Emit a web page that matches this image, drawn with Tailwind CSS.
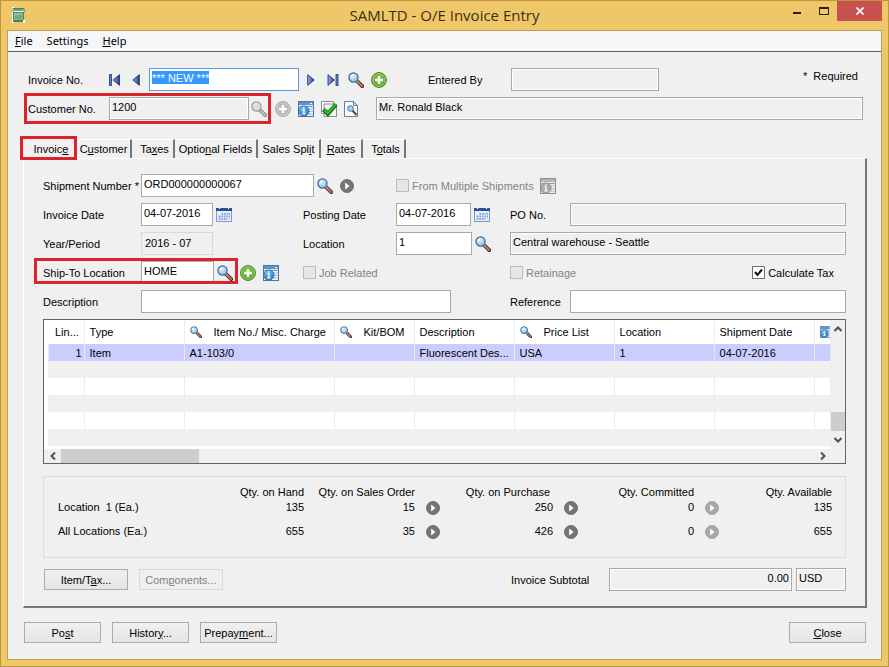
<!DOCTYPE html>
<html lang="en">

<head>
    <meta charset="UTF-8">
    <meta name="viewport" content="width=device-width, initial-scale=1.0">
    <title>SAMLTD - O/E Invoice Entry</title>
    <script src="https://cdn.jsdelivr.net/npm/@tailwindcss/browser@4"></script>
</head>

<body class="bg-[#efc769] font-['Liberation_Sans',Arial,sans-serif] text-[11px] leading-4 text-black">
    <!-- Icon set (zero size rather than hidden, so the gradients still resolve) -->
    <svg class="absolute w-0 h-0" aria-hidden="true">
        <defs>
            <linearGradient id="gBlue" x1="0" y1="0" x2="1" y2="0">
                <stop offset="0" stop-color="#8fb0ec" />
                <stop offset="1" stop-color="#1c3f9a" />
            </linearGradient>
            <radialGradient id="gLens" cx=".4" cy=".35" r=".7">
                <stop offset="0" stop-color="#e4f5ff" />
                <stop offset="1" stop-color="#7db9e3" />
            </radialGradient>
            <radialGradient id="gGreen" cx=".5" cy=".4" r=".6">
                <stop offset="0" stop-color="#8ed24c" />
                <stop offset="1" stop-color="#4c9a20" />
            </radialGradient>
            <radialGradient id="gInfo" cx=".4" cy=".3" r=".8">
                <stop offset="0" stop-color="#7cc4f4" />
                <stop offset="1" stop-color="#1e70b8" />
            </radialGradient>
            <symbol id="first" viewBox="0 0 12 12">
                <rect x=".5" y=".5" width="2" height="11" fill="#5f80c8" stroke="#23376e" stroke-width=".8" />
                <path d="M10.500.700V11.300L4 6z" fill="url(#gBlue)" stroke="#23376e" stroke-width=".9" />
            </symbol>
            <symbol id="prev" viewBox="0 0 8 12">
                <path d="M7.300.700V11.300L.800 6z" fill="url(#gBlue)" stroke="#23376e" stroke-width=".9" />
            </symbol>
            <symbol id="next" viewBox="0 0 8 12">
                <path d="M.700.700V11.300L7.200 6z" fill="url(#gBlue)" stroke="#23376e" stroke-width=".9" />
            </symbol>
            <symbol id="last" viewBox="0 0 12 12">
                <path d="M1 .700V11.300L7.500 6z" fill="url(#gBlue)" stroke="#23376e" stroke-width=".9" />
                <rect x="9" y=".5" width="2" height="11" fill="#5f80c8" stroke="#23376e" stroke-width=".8" />
            </symbol>
            <symbol id="find" viewBox="0 0 16 16">
                <path d="M9.500 9.500l4.700 4.700" stroke="#4b2020" stroke-width="3.800" stroke-linecap="round" />
                <path d="M10.500 10.500l3.500 3.500" stroke="#b9786f" stroke-width="2.200" stroke-linecap="round" />
                <path d="M8.200 8.200l2 2" stroke="#a8a8a8" stroke-width="2" />
                <circle cx="5.500" cy="5.500" r="4.600" fill="url(#gLens)" stroke="#3d678f" stroke-width="1.200" />
                <path d="M3 5a2.800 2.800 0 012.500-2.300" stroke="#fff" stroke-width="1.100" fill="none" />
            </symbol>
            <symbol id="find-off" viewBox="0 0 16 16">
                <path d="M9.500 9.500l4.700 4.700" stroke="#858585" stroke-width="3.800" stroke-linecap="round" />
                <path d="M10 10l4 4" stroke="#c4c4c4" stroke-width="2" stroke-linecap="round" />
                <circle cx="5.500" cy="5.500" r="4.600" fill="#dcdcdc" stroke="#9c9c9c" stroke-width="1.200" />
                <path d="M3 5a2.800 2.800 0 012.500-2.300" stroke="#fff" stroke-width="1.100" fill="none" />
            </symbol>
            <symbol id="add" viewBox="0 0 16 16">
                <circle cx="8" cy="8" r="7.400" fill="url(#gGreen)" stroke="#3f7f22" />
                <circle cx="8" cy="8" r="6.300" fill="none" stroke="#b5e08a" stroke-width=".8" />
                <path d="M8 4v8M4 8h8" stroke="#fff" stroke-width="2.400" />
            </symbol>
            <symbol id="add-off" viewBox="0 0 16 16">
                <circle cx="8" cy="8" r="7.400" fill="#b9b9b9" stroke="#a4a4a4" />
                <circle cx="8" cy="8" r="6.300" fill="none" stroke="#dadada" stroke-width=".8" />
                <path d="M8 4v8M4 8h8" stroke="#fff" stroke-width="2.400" />
            </symbol>
            <symbol id="info" viewBox="0 0 16 16">
                <rect x=".5" y=".5" width="15" height="15" fill="#eaf2fa" stroke="#54779f" />
                <path d="M1 2.500h14" stroke="#5b94cf" stroke-width="3" />
                <path d="M1.500 5.500h13M11 8h1.500M13.500 8h1M11 10.500h1.500M13.500 10.500h1M11 13h1.500M13.500 13h1" stroke="#6a8fb8" />
                <path d="M12 2.500h2" stroke="#fff" />
                <circle cx="5.800" cy="10" r="5.200" fill="url(#gInfo)" stroke="#2a6ba8" stroke-width=".7" />
                <path d="M5.800 6.200v1.500M4.600 9h1.400v3.800M4.300 12.800h3.200" stroke="#fff" stroke-width="1.300" fill="none" />
            </symbol>
            <symbol id="info-off" viewBox="0 0 16 16">
                <rect x=".5" y=".5" width="15" height="15" fill="#ececec" stroke="#8e8e8e" />
                <path d="M1 2.500h14" stroke="#b5b5b5" stroke-width="3" />
                <path d="M1.500 5.500h13M11 8h1.500M13.500 8h1M11 10.500h1.500M13.500 10.500h1M11 13h1.500M13.500 13h1" stroke="#999" />
                <circle cx="5.800" cy="10" r="5.200" fill="#aaa" stroke="#8a8a8a" stroke-width=".7" />
                <path d="M5.800 6.200v1.500M4.600 9h1.400v3.800M4.300 12.800h3.200" stroke="#fff" stroke-width="1.300" fill="none" />
            </symbol>
            <symbol id="check" viewBox="0 0 16 16">
                <path d="M.5.500h12v12H.5z" fill="#fff" stroke="#8b8b8b" />
                <path d="M3 3h12.500v12.500H3z" fill="#f4f4f4" stroke="#8b8b8b" />
                <path d="M2.500 8.500l4.300 4.300 8-9" stroke="#0b5c0b" stroke-width="4.200" fill="none" />
                <path d="M3 8.600l3.800 3.600 7.400-8.200" stroke="#2cc02c" stroke-width="2.400" fill="none" />
            </symbol>
            <symbol id="preview" viewBox="0 0 14 16">
                <path d="M.5.500h9l4 4v11H.5z" fill="#f7fafd" stroke="#6b7f96" />
                <path d="M9.500.500v4h4z" fill="#c9dcf0" stroke="#6b7f96" />
                <path d="M8.500 9.500l4 4.500" stroke="#7d3f38" stroke-width="2.200" />
                <circle cx="6.500" cy="7.500" r="2.800" fill="#a6d5f2" stroke="#3d6fa3" />
            </symbol>
            <symbol id="cal" viewBox="0 0 16 15">
                <rect x=".5" y="1.500" width="15" height="13" fill="#e8effa" stroke="#7d9bd0" />
                <path d="M0 2.500h16" stroke="#2c4f96" stroke-width="3" />
                <path d="M3.500 0v2M12.500 0v2" stroke="#fff" stroke-width="1.200" />
                <path d="M5 6h9v5.500h-2.500V13H2.500V8H5z" fill="#8aa5dc" />
                <path d="M2 8.200h12M2 10.700h12M5 6v7M7.500 6v7M10 6v7M12.200 6v7" stroke="#fff" stroke-width=".6" />
            </symbol>
            <symbol id="go" viewBox="0 0 14 14">
                <circle cx="7" cy="7" r="6.500" fill="#757575" stroke="#5d5d5d" stroke-width=".8" />
                <path d="M5.200 3.500v7L9.500 7z" fill="#fff" />
            </symbol>
            <symbol id="go-off" viewBox="0 0 14 14">
                <circle cx="7" cy="7" r="6.500" fill="#a9a9a9" stroke="#999" stroke-width=".8" />
                <path d="M5.200 3.500v7L9.500 7z" fill="#fff" />
            </symbol>
        </defs>
    </svg>

    <div class="min-h-screen flex flex-col border border-[#b9973f] px-[6px] pb-[6px]">
        <!-- Title bar -->
        <header class="grid grid-cols-[1fr_auto_1fr] h-[29px]">
            <div class="pl-[5px] pt-[6px]">
                <svg class="w-[13px] h-4" viewBox="0 0 13 16">
                    <path d="M0 0h2v16H0z" fill="#fff" />
                    <path d="M1 1.500h11v4H1z" fill="#fff" stroke="#4f7a5a" />
                    <path d="M2 2h9v2H2z" fill="#5fa873" />
                    <path d="M1.500 5.500h10v8h-10z" fill="#8cc496" stroke="#4c8459" />
                    <path d="M2.500 9l8-2v5.500h-8z" fill="#6eb07c" />
                    <path d="M1 14.500h10" stroke="#4f7a5a" />
                    <path d="M11 13h2v3h-2z" fill="#fff" />
                </svg>
            </div>
            <h1 class="font-['Open_Sans','Noto_Sans',sans-serif] text-[15px] leading-[29px] text-[#3a2f14]">SAMLTD - O/E Invoice Entry</h1>
            <div class="flex justify-end">
                <button type="button" aria-label="Minimize" class="w-[26px] h-[19px] flex justify-center items-center">
                    <svg class="w-2 h-2" viewBox="0 0 8 8"><path d="M0 5h8v2H0z" fill="#2a220c" /></svg>
                </button>
                <button type="button" aria-label="Maximize" class="w-[27px] h-[19px] flex justify-center items-center">
                    <svg class="w-[10px] h-2" viewBox="0 0 10 8"><path d="M0 0h10v8H0zM1 2v5h8V2z" fill="#2a220c" fill-rule="evenodd" /></svg>
                </button>
                <button type="button" aria-label="Close window" class="w-[45px] h-[20px] bg-[#c75050] flex justify-center items-center">
                    <svg class="w-2 h-2" viewBox="0 0 8 8"><path d="M.5.500l7 7M7.500.500l-7 7" stroke="#fff" stroke-width="1.600" /></svg>
                </button>
            </div>
        </header>

        <div class="flex-1 border border-[#b99f5e] bg-[#f0f0f0]">
            <!-- Menu -->
            <nav class="flex gap-[14px] h-[21px] px-[7px] bg-[#f5f6f7] border-b border-[#5f5f5f] font-['Noto_Sans','Open_Sans',sans-serif] text-[11px] leading-5">
                <a href="#"><u>F</u>ile</a>
                <a href="#">Settings</a>
                <a href="#"><u>H</u>elp</a>
            </nav>

            <main class="pt-4 pb-[15px] pl-[15px] pr-[14px]">
                <!-- Document header -->
                <div class="pl-[5px] pr-1 flex flex-col gap-[6px]">
                    <div class="flex items-center h-[23px]">
                        <label for="invoiceNo" class="w-[81px]">Invoice No.</label>
                        <button type="button" aria-label="First"><svg class="w-3 h-3"><use href="#first" /></svg></button>
                        <button type="button" aria-label="Previous" class="ml-[11px]"><svg class="w-2 h-3"><use href="#prev" /></svg></button>
                        <div class="ml-[9px] w-[150px] h-[23px] border border-[#569de5] bg-white pl-[2px] pt-[2px]">
                            <input id="invoiceNo" value="*** NEW ***" class="block w-[57px] h-[13px] bg-[#3399ff] text-white outline-none">
                        </div>
                        <button type="button" aria-label="Next" class="ml-2"><svg class="w-2 h-3"><use href="#next" /></svg></button>
                        <button type="button" aria-label="Last" class="ml-3"><svg class="w-3 h-3"><use href="#last" /></svg></button>
                        <button type="button" aria-label="Find invoice" class="ml-[9px]"><svg class="w-4 h-4"><use href="#find" /></svg></button>
                        <button type="button" aria-label="New invoice" class="ml-[7px]"><svg class="w-4 h-4"><use href="#add" /></svg></button>
                        <label for="enteredBy" class="ml-[41px] w-[83px]">Entered By</label>
                        <input id="enteredBy" readonly class="w-[148px] h-[23px] border border-[#a9a9a9] bg-[#f0f0f0] inset-ring inset-ring-white">
                        <p class="ml-auto mr-[5px] pb-[7px]">* &nbsp;Required</p>
                    </div>
                    <div class="flex items-center h-[23px]">
                        <div class="relative flex items-center">
                            <label for="customerNo" class="w-[81px]">Customer No.</label>
                            <input id="customerNo" readonly value="1200" class="w-[140px] h-[23px] px-[2px] pb-1 border border-[#a9a9a9] bg-[#f0f0f0] inset-ring inset-ring-white">
                            <button type="button" disabled aria-label="Find customer" class="ml-[2px]"><svg class="w-4 h-4"><use href="#find-off" /></svg></button>
                            <div class="absolute -top-1 -bottom-1 -left-1 -right-1 border-3 border-[#d9242c] pointer-events-none"></div>
                        </div>
                        <div class="ml-2 flex gap-[7px]">
                            <button type="button" disabled aria-label="New customer"><svg class="w-4 h-4"><use href="#add-off" /></svg></button>
                            <button type="button" aria-label="Customer information"><svg class="w-4 h-4"><use href="#info" /></svg></button>
                            <button type="button" aria-label="Credit check"><svg class="w-4 h-4"><use href="#check" /></svg></button>
                            <button type="button" aria-label="Preview"><svg class="w-[14px] h-4"><use href="#preview" /></svg></button>
                        </div>
                        <input aria-label="Customer name" readonly value="Mr. Ronald Black" class="ml-[18px] flex-1 min-w-0 h-[23px] px-[2px] pb-1 border border-[#a9a9a9] bg-[#f0f0f0] inset-ring inset-ring-white">
                    </div>
                </div>

                <!-- Tabs -->
                <div class="flex h-[19px] mt-[19px]">
                    <button type="button" class="relative w-[54px] pl-[2px]">Invoic<u>e</u>
                        <span class="absolute -top-[3px] -bottom-[2px] -left-[3px] right-0 border-3 border-[#d9242c]"></span>
                    </button>
                    <button type="button" class="w-[55px] border-t border-t-white border-r-2 border-r-[#777]">C<u>u</u>stomer</button>
                    <button type="button" class="w-[43px] pl-1 border-t border-t-white border-r-2 border-r-[#777]">Ta<u>x</u>es</button>
                    <button type="button" class="w-[83px] border-t border-t-white border-r-2 border-r-[#777]">Optio<u>n</u>al Fields</button>
                    <button type="button" class="w-[63px] border-t border-t-white border-r-2 border-r-[#777]">Sales Spl<u>i</u>t</button>
                    <button type="button" class="w-[42px] border-t border-t-white border-r-2 border-r-[#777]"><u>R</u>ates</button>
                    <button type="button" class="w-[43px] pl-1 border-t border-t-white border-r-2 border-r-[#777]">T<u>o</u>tals</button>
                </div>

                <!-- Invoice tab -->
                <section class="border-t border-l border-t-white border-l-white border-r-2 border-b-2 border-r-[#777] border-b-[#777] pt-[15px] pb-[15px] pl-[19px] pr-[19px]">
                    <div class="flex flex-col gap-[6px]">
                        <div class="flex items-center h-[23px]">
                            <div class="w-[353px] flex items-center">
                                <label for="shipmentNo" class="w-[98px]">Shipment Number *</label>
                                <input id="shipmentNo" value="ORD000000000067" class="w-[173px] h-[23px] px-[2px] pb-1 border border-[#a9a9a9] bg-white">
                                <button type="button" aria-label="Find shipment" class="ml-[3px]"><svg class="w-4 h-4"><use href="#find" /></svg></button>
                                <button type="button" aria-label="Load shipment" class="ml-[7px]"><svg class="w-[14px] h-[14px]"><use href="#go" /></svg></button>
                            </div>
                            <label class="flex items-center gap-[3px] text-[#838383]">
                                <input type="checkbox" disabled class="appearance-none w-[13px] h-[13px] border border-[#bcbcbc] bg-[#e6e6e6]">From Multiple Shipments
                            </label>
                            <button type="button" disabled aria-label="Shipment list" class="ml-[6px]"><svg class="w-4 h-4"><use href="#info-off" /></svg></button>
                        </div>

                        <div class="flex items-center h-[23px]">
                            <div class="w-[260px] flex items-center">
                                <label for="invoiceDate" class="w-[98px]">Invoice Date</label>
                                <input id="invoiceDate" value="04-07-2016" class="w-[72px] h-[23px] px-[2px] pb-1 border border-[#a9a9a9] bg-white">
                                <button type="button" aria-label="Pick invoice date" class="ml-[3px]"><svg class="w-4 h-[15px]"><use href="#cal" /></svg></button>
                            </div>
                            <div class="w-[207px] flex items-center">
                                <label for="postingDate" class="w-[93px]">Posting Date</label>
                                <input id="postingDate" value="04-07-2016" class="w-[75px] h-[23px] px-[2px] pb-1 border border-[#a9a9a9] bg-white">
                                <button type="button" aria-label="Pick posting date" class="ml-[3px]"><svg class="w-4 h-[15px]"><use href="#cal" /></svg></button>
                            </div>
                            <div class="flex-1 flex items-center">
                                <label for="poNo" class="w-[60px]">PO No.</label>
                                <input id="poNo" readonly class="flex-1 min-w-0 h-[23px] border border-[#a9a9a9] bg-[#f0f0f0] inset-ring inset-ring-white">
                            </div>
                        </div>

                        <div class="flex items-center h-[23px]">
                            <div class="w-[260px] flex items-center">
                                <label for="period" class="w-[98px]">Year/Period</label>
                                <input id="period" readonly value="2016 - 07" class="w-[72px] h-[23px] px-[3px] pb-[2px] border border-[#d9d9d9] bg-[#f0f0f0]">
                            </div>
                            <div class="w-[207px] flex items-center">
                                <label for="location" class="w-[93px]">Location</label>
                                <input id="location" value="1" class="w-[76px] h-[23px] px-[2px] pb-1 border border-[#a9a9a9] bg-white">
                                <button type="button" aria-label="Find location" class="ml-[3px]"><svg class="w-4 h-4"><use href="#find" /></svg></button>
                            </div>
                            <input aria-label="Location name" readonly value="Central warehouse - Seattle" class="flex-1 min-w-0 h-[23px] px-[2px] pb-1 border border-[#a9a9a9] bg-[#f0f0f0] inset-ring inset-ring-white">
                        </div>

                        <div class="flex items-center h-[23px]">
                            <div class="w-[260px] flex items-center">
                                <div class="relative flex items-center">
                                    <label for="shipTo" class="w-[98px]">Ship-To Location</label>
                                    <input id="shipTo" value="HOME" class="w-[73px] h-[23px] px-[2px] pb-1 border border-[#a9a9a9] bg-white">
                                    <button type="button" aria-label="Find ship-to location" class="ml-[3px]"><svg class="w-4 h-4"><use href="#find" /></svg></button>
                                    <div class="absolute -top-[3px] bottom-0 -left-[9px] -right-[5px] border-3 border-[#d9242c] pointer-events-none"></div>
                                </div>
                                <button type="button" aria-label="New ship-to location" class="ml-[7px]"><svg class="w-4 h-4"><use href="#add" /></svg></button>
                                <button type="button" aria-label="Ship-to information" class="ml-[7px]"><svg class="w-4 h-4"><use href="#info" /></svg></button>
                            </div>
                            <label class="w-[207px] flex items-center gap-[3px] text-[#838383]">
                                <input type="checkbox" disabled class="appearance-none w-[13px] h-[13px] border border-[#bcbcbc] bg-[#e6e6e6]">Job Related
                            </label>
                            <label class="flex items-center gap-[3px] text-[#838383]">
                                <input type="checkbox" disabled class="appearance-none w-[13px] h-[13px] border border-[#bcbcbc] bg-[#e6e6e6]">Retainage
                            </label>
                            <label class="ml-auto mr-3 flex items-center gap-[3px]">
                                <span class="relative flex">
                                    <input type="checkbox" checked class="peer appearance-none w-[13px] h-[13px] border border-[#707070] bg-white">
                                    <svg class="absolute inset-0 w-[13px] h-[13px] hidden peer-checked:block pointer-events-none" viewBox="0 0 13 13">
                                        <path d="M3 6l2.500 3L10 3.500" stroke="#111" stroke-width="2" fill="none" />
                                    </svg>
                                </span>Calculate Tax
                            </label>
                        </div>

                        <div class="flex items-center h-[23px]">
                            <div class="w-[467px] flex items-center">
                                <label for="description" class="w-[98px]">Description</label>
                                <input id="description" class="w-[310px] h-[23px] px-[2px] pb-1 border border-[#a9a9a9] bg-white">
                            </div>
                            <div class="flex-1 flex items-center">
                                <label for="reference" class="w-[60px]">Reference</label>
                                <input id="reference" class="flex-1 min-w-0 h-[23px] px-[2px] pb-1 border border-[#a9a9a9] bg-white">
                            </div>
                        </div>
                    </div>

                    <!-- Detail lines -->
                    <div class="mt-[6px] border border-[#646464] bg-[#f0f0f0]">
                        <div class="flex">
                            <div class="flex-1 min-w-0 overflow-hidden bg-white pb-[3px]">
                                <table class="w-full table-fixed border-collapse whitespace-nowrap">
                                    <colgroup>
                                        <col class="w-1">
                                        <col class="w-9">
                                        <col class="w-[100px]">
                                        <col class="w-[150px]">
                                        <col class="w-[80px]">
                                        <col class="w-[100px]">
                                        <col class="w-[100px]">
                                        <col class="w-[100px]">
                                        <col class="w-[100px]">
                                        <col>
                                    </colgroup>
                                    <thead>
                                        <tr class="h-6 text-left *:font-normal *:p-0 *:border-r *:border-[#e6edf5]">
                                            <th colspan="2"><span class="pl-[11px]">Lin...</span></th>
                                            <th><span class="pl-[5px]">Type</span></th>
                                            <th><div class="flex items-center gap-3 pl-[5px]"><svg class="w-3 h-3"><use href="#find" /></svg>Item No./ Misc. Charge</div></th>
                                            <th><div class="flex items-center gap-3 pl-[5px]"><svg class="w-3 h-3"><use href="#find" /></svg>Kit/BOM</div></th>
                                            <th><span class="pl-[5px]">Description</span></th>
                                            <th><div class="flex items-center gap-3 pl-[5px]"><svg class="w-3 h-3"><use href="#find" /></svg>Price List</div></th>
                                            <th><span class="pl-[5px]">Location</span></th>
                                            <th><span class="pl-[5px]">Shipment Date</span></th>
                                            <th class="overflow-hidden"><div class="pl-[5px]"><svg class="w-3 h-3"><use href="#info" /></svg></div></th>
                                        </tr>
                                    </thead>
                                    <tbody>
                                        <tr class="h-[17px] bg-[#ccccff] *:py-0 *:px-[5px] *:border-r *:border-[#e8e8f6]">
                                            <td class="bg-white"></td>
                                            <td><div class="-mx-1 text-right pr-[1px]">1</div></td>
                                            <td>Item</td>
                                            <td>A1-103/0</td>
                                            <td></td>
                                            <td>Fluorescent Des...</td>
                                            <td>USA</td>
                                            <td>1</td>
                                            <td>04-07-2016</td>
                                            <td></td>
                                        </tr>
                                        <tr class="h-[17px] bg-[#f0f0f0] *:p-0 *:border-r *:border-[#ececec]"><td class="bg-white"></td><td></td><td></td><td></td><td></td><td></td><td></td><td></td><td></td><td></td></tr>
                                        <tr class="h-[17px] bg-white *:p-0 *:border-r *:border-[#ececec]"><td class="border-white!"></td><td></td><td></td><td></td><td></td><td></td><td></td><td></td><td></td><td></td></tr>
                                        <tr class="h-[17px] bg-[#f0f0f0] *:p-0 *:border-r *:border-[#ececec]"><td class="bg-white"></td><td></td><td></td><td></td><td></td><td></td><td></td><td></td><td></td><td></td></tr>
                                        <tr class="h-[17px] bg-white *:p-0 *:border-r *:border-[#ececec]"><td class="border-white!"></td><td></td><td></td><td></td><td></td><td></td><td></td><td></td><td></td><td></td></tr>
                                        <tr class="h-[17px] bg-[#f0f0f0] *:p-0 *:border-r *:border-[#ececec]"><td class="bg-white"></td><td></td><td></td><td></td><td></td><td></td><td></td><td></td><td></td><td></td></tr>
                                    </tbody>
                                </table>
                            </div>
                            <!-- Vertical scrollbar -->
                            <div class="w-[14px] flex flex-col">
                                <button type="button" aria-label="Scroll up" class="h-[18px] flex justify-center items-center">
                                    <svg class="w-2 h-[6px]" viewBox="0 0 8 6"><path d="M.5 5L4 1.500 7.500 5" stroke="#505050" stroke-width="2" fill="none" /></svg>
                                </button>
                                <div class="flex-1 flex flex-col justify-end"><div class="h-[19px] bg-[#cdcdcd]"></div></div>
                                <button type="button" aria-label="Scroll down" class="h-[18px] flex justify-center items-center">
                                    <svg class="w-2 h-[6px]" viewBox="0 0 8 6"><path d="M.5 1L4 4.500 7.500 1" stroke="#505050" stroke-width="2" fill="none" /></svg>
                                </button>
                            </div>
                        </div>
                        <!-- Horizontal scrollbar -->
                        <div class="h-[14px] flex pr-[14px]">
                            <button type="button" aria-label="Scroll left" class="w-[17px] flex justify-center items-center">
                                <svg class="w-[6px] h-2" viewBox="0 0 6 8"><path d="M5 .500L1.500 4 5 7.500" stroke="#505050" stroke-width="2" fill="none" /></svg>
                            </button>
                            <div class="flex-1"><div class="w-[138px] h-full bg-[#cdcdcd]"></div></div>
                            <button type="button" aria-label="Scroll right" class="w-[17px] flex justify-center items-center">
                                <svg class="w-[6px] h-2" viewBox="0 0 6 8"><path d="M1 .500L4.500 4 1 7.500" stroke="#505050" stroke-width="2" fill="none" /></svg>
                            </button>
                        </div>
                    </div>

                    <!-- Quantities -->
                    <div class="mt-3 h-[82px] border border-[#dcdcdc] pt-2 pl-[14px] pr-[13px]">
                        <table class="w-full table-fixed text-right whitespace-nowrap leading-[15px]">
                            <colgroup>
                                <col>
                                <col class="w-[100px]">
                                <col class="w-[111px]">
                                <col class="w-10">
                                <col class="w-[98px]">
                                <col class="w-10">
                                <col class="w-[101px]">
                                <col class="w-10">
                                <col class="w-[98px]">
                            </colgroup>
                            <thead>
                                <tr class="h-[15px] *:p-0 *:font-normal">
                                    <td></td>
                                    <th>Qty. on Hand</th>
                                    <th>Qty. on Sales Order</th>
                                    <td></td>
                                    <th><span class="pr-[3px]">Qty. on Purchase</span></th>
                                    <td></td>
                                    <th>Qty. Committed</th>
                                    <td></td>
                                    <th>Qty. Available</th>
                                </tr>
                            </thead>
                            <tbody>
                                <tr class="h-[15px] *:p-0">
                                    <th class="text-left font-normal">Location &nbsp;1 (Ea.)</th>
                                    <td>135</td>
                                    <td>15</td>
                                    <td><button type="button" aria-label="Sales orders" class="block ml-[11px]"><svg class="w-[14px] h-[14px]"><use href="#go" /></svg></button></td>
                                    <td>250</td>
                                    <td><button type="button" aria-label="Purchase orders" class="block ml-[11px]"><svg class="w-[14px] h-[14px]"><use href="#go" /></svg></button></td>
                                    <td>0</td>
                                    <td><button type="button" disabled aria-label="Committed" class="block ml-[11px]"><svg class="w-[14px] h-[14px]"><use href="#go-off" /></svg></button></td>
                                    <td>135</td>
                                </tr>
                                <tr class="h-[33px] *:p-0">
                                    <th class="text-left font-normal">All Locations (Ea.)</th>
                                    <td>655</td>
                                    <td>35</td>
                                    <td><button type="button" aria-label="All sales orders" class="block ml-[11px]"><svg class="w-[14px] h-[14px]"><use href="#go" /></svg></button></td>
                                    <td>426</td>
                                    <td><button type="button" aria-label="All purchase orders" class="block ml-[11px]"><svg class="w-[14px] h-[14px]"><use href="#go" /></svg></button></td>
                                    <td>0</td>
                                    <td><button type="button" disabled aria-label="All committed" class="block ml-[11px]"><svg class="w-[14px] h-[14px]"><use href="#go-off" /></svg></button></td>
                                    <td>655</td>
                                </tr>
                            </tbody>
                        </table>
                    </div>

                    <div class="mt-[10px] flex items-center h-[23px]">
                        <button type="button" class="ml-[1px] w-[84px] h-[21px] border border-[#acacac] bg-linear-to-b from-[#f0f0f0] to-[#e5e5e5]">Item/T<u>a</u>x...</button>
                        <button type="button" disabled class="ml-[11px] w-[84px] h-[21px] border border-[#d9d9d9] bg-[#efefef] text-[#838383]">Com<u>p</u>onents...</button>
                        <label for="subtotal" class="ml-auto w-[98px]">Invoice Subtotal</label>
                        <input id="subtotal" readonly value="0.00" class="w-[183px] h-[23px] px-[2px] pb-1 text-right border border-[#a9a9a9] bg-[#f0f0f0] inset-ring inset-ring-white">
                        <input aria-label="Currency" readonly value="USD" class="ml-1 w-[50px] h-[23px] px-[2px] pb-1 border border-[#a9a9a9] bg-[#f0f0f0] inset-ring inset-ring-white">
                    </div>
                </section>

                <!-- Actions -->
                <div class="mt-[14px] flex gap-[11px] px-[1px] *:w-[77px] *:h-[21px] *:border *:border-[#acacac] *:bg-linear-to-b *:from-[#f0f0f0] *:to-[#e5e5e5]">
                    <button type="button">Po<u>s</u>t</button>
                    <button type="button">Histor<u>y</u>...</button>
                    <button type="button">Prepay<u>m</u>ent...</button>
                    <button type="button" class="ml-auto"><u>C</u>lose</button>
                </div>
            </main>
        </div>
    </div>
</body>

</html>
